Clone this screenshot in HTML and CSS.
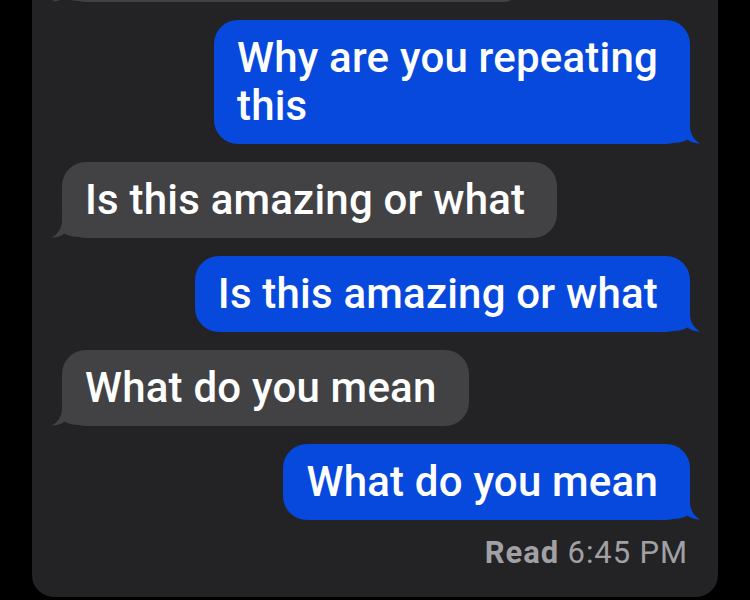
FILE: index.html
```html
<!DOCTYPE html>
<html lang="en">
<head>
<meta charset="utf-8">
<title>Messages</title>
<link rel="stylesheet" href="styles.css">
</head>
<body>
<div class="screen">
  <div class="thread">
    <div class="msg in">
      <div class="bubble partial">
        <svg class="tail" viewBox="0 0 30 22" aria-hidden="true"><path d="M20 0 L20 4 C20 12 24 18 30 21.5 C25 21.5 20.5 20 17.5 17.5 C14 19.5 9 21 3 21 L0 21 L0 0 Z"/></svg>
      </div>
    </div>
    <div class="msg out">
      <div class="bubble">Why are you repeating<br>this
        <svg class="tail" viewBox="0 0 30 22" aria-hidden="true"><path d="M20 0 L20 4 C20 12 24 18 30 21.5 C25 21.5 20.5 20 17.5 17.5 C14 19.5 9 21 3 21 L0 21 L0 0 Z"/></svg>
      </div>
    </div>
    <div class="msg in">
      <div class="bubble">Is this amazing or what
        <svg class="tail" viewBox="0 0 30 22" aria-hidden="true"><path d="M20 0 L20 4 C20 12 24 18 30 21.5 C25 21.5 20.5 20 17.5 17.5 C14 19.5 9 21 3 21 L0 21 L0 0 Z"/></svg>
      </div>
    </div>
    <div class="msg out">
      <div class="bubble">Is this amazing or what
        <svg class="tail" viewBox="0 0 30 22" aria-hidden="true"><path d="M20 0 L20 4 C20 12 24 18 30 21.5 C25 21.5 20.5 20 17.5 17.5 C14 19.5 9 21 3 21 L0 21 L0 0 Z"/></svg>
      </div>
    </div>
    <div class="msg in">
      <div class="bubble">What do you mean
        <svg class="tail" viewBox="0 0 30 22" aria-hidden="true"><path d="M20 0 L20 4 C20 12 24 18 30 21.5 C25 21.5 20.5 20 17.5 17.5 C14 19.5 9 21 3 21 L0 21 L0 0 Z"/></svg>
      </div>
    </div>
    <div class="msg out">
      <div class="bubble">What do you mean
        <svg class="tail" viewBox="0 0 30 22" aria-hidden="true"><path d="M20 0 L20 4 C20 12 24 18 30 21.5 C25 21.5 20.5 20 17.5 17.5 C14 19.5 9 21 3 21 L0 21 L0 0 Z"/></svg>
      </div>
    </div>
  </div>
  <div class="receipt"><b>Read</b> 6:45 PM</div>
</div>
</body>
</html>
```
FILE: styles.css
```css
html, body {
  margin: 0;
  padding: 0;
  background: #000;
  height: 600px;
  overflow: hidden;
}

body {
  font-family: Roboto, "Liberation Sans", Arial, sans-serif;
  color: #fff;
}

.screen {
  width: 686px;
  margin: -74px 0 0 32px;
  background: #232325;
  border-radius: 0 0 22px 22px;
  padding: 0 28px 28px 30px;
  box-sizing: border-box;
}

.thread {
  display: flex;
  flex-direction: column;
  gap: 18px;
}

.msg {
  display: flex;
}

.msg.out {
  justify-content: flex-end;
}

.bubble {
  position: relative;
  font-size: 42px;
  font-weight: 500;
  letter-spacing: 0.2px;
  line-height: 48px;
  padding: 14px 32px 14px 23px;
  border-radius: 24px;
}

.bubble.partial {
  width: 409px;
  height: 48px;
}

.msg.in .bubble {
  background: #424245;
}

.msg.out .bubble {
  background: #0749dc;
}

.tail {
  position: absolute;
  bottom: 0;
  width: 30px;
  height: 22px;
}

.msg.out .tail {
  right: -10px;
  fill: #0749dc;
}

.msg.in .tail {
  left: -10px;
  fill: #424245;
  transform: scaleX(-1);
}

.receipt {
  margin-top: 17px;
  padding-right: 2px;
  text-align: right;
  font-size: 31px;
  letter-spacing: 0.9px;
  line-height: 32px;
  color: #a0a0a5;
}

.receipt b {
  font-weight: 700;
}
```
